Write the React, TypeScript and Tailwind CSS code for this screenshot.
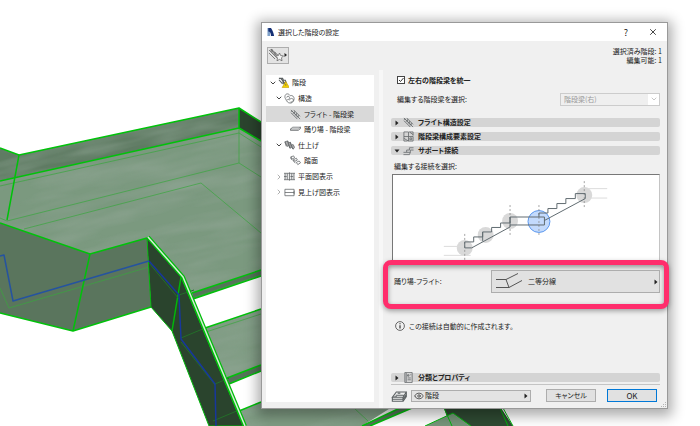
import type { ReactNode } from "react";
import clsx from "clsx";
import { ChevronDown, ChevronRight, Eye, X } from "lucide-react";

type IconName =
  | "stairs"
  | "structure"
  | "flight"
  | "landing"
  | "finish"
  | "tread"
  | "plan"
  | "ceiling"
  | "components"
  | "support"
  | "property"
  | "layer";

const iconPaths: Record<IconName, ReactNode> = {
  stairs: (
    <>
      <path d="M1 1.500h4l1 2h2l1 3M1 3l4 4.500M3 1.500l6 7M5 5l3 5" strokeWidth="1.200" />
      <path d="M8.500 5l4 6.500h-8z" fill="#f5d000" stroke="#b89600" strokeWidth=".6" />
      <path d="M8.500 7.500v2" />
    </>
  ),
  structure: (
    <>
      <path d="M1 4c0-3 3-4 5-2l1 1c2-1 4 1 4 3s-1 5-4 5-4-2-5-4-1-2-1-3z" />
      <path d="M3 5c0-2 3-2 3 0s-2 3-3 2M6 8c0-2 3-3 4-1s-2 3-3 3" />
    </>
  ),
  flight: <path d="M1 1l10 10M1 4l7 7M4 1l7 7M1 2.500h2M3 4.500h2M5 6.500h2M7 8.500h2M5 2.500v2M7 4.500v2M9 6.500v2" />,
  landing: <path d="M.5 5.500L3 3.500h8.500L9 5.500zM.5 5.500V7H9l2.500-2V3.500" fill="#fff" />,
  finish: (
    <>
      <path d="M1 2l3-1 1 2 2-.5 1 3 2-.5 1.500 3L10 10l-2-2-1.500 1-1.500-3-1.500 1z" fill="#b5b5b5" />
      <path d="M1 2l1.500 5M4 1l1 5M5 3l1.500 6M7 2.500l1 5.500M8 5.500l2 4.500" />
    </>
  ),
  tread: <path d="M1 2l3-1 1 2-3 1.500zM4 5l3-1.500 1 2-3 1.500zM7 8l3-1.500 1.500 2-3 2zM1 2v2l2 2M4 5v2l2 2" />,
  plan: <path d="M0 2.500h12v7H0zM2 2.500v7M4 2.500v7M6 1.500v9M8 2.500v7M10 2.500v7M0 6h3M7 6h3" />,
  ceiling: <path d="M1 2.500h10v7H1zM1 6h10M11 4v4" />,
  components: (
    <>
      <path d="M1 1h5v5H1zM1 8l5 3M7 1l4 3M1 6v5h4M7 1h4v4" />
      <path d="M6 6h5v5H6zM7.500 7.500h2v2h-2z" />
    </>
  ),
  support: <path d="M.5 8H4V5.500h3V3h4.500M.5 10.500H7l1-2.500M4 8h4V5.500h3.500" />,
  property: <path d="M2 .5h8v11H2zM5 3h1.500v1.500H5zM8 3h1M5 6.500h3.500M5 8.500h3.500M3.500 1v10" />,
  layer: <path d="M1 7l3-4h7.500l-2.500 4zM1 7v3h8V7M9 10l2.500-3.500V3M1 8.500h8l2.500-3.500M3.500 5.500h6M5 4h2M2.500 6.500h2" />,
};

const Icon = ({ name, className = "size-3" }: { name: IconName; className?: string }) => (
  <svg
    viewBox="0 0 12 12"
    className={clsx("shrink-0", className)}
    fill="none"
    stroke="#5a5f61"
    strokeWidth=".8"
    aria-hidden="true"
  >
    {iconPaths[name]}
  </svg>
);

const Triangle = ({ down = false }: { down?: boolean }) => (
  <svg viewBox="0 0 6 6" className="size-[6px] shrink-0" fill="#222" aria-hidden="true">
    <path d={down ? "M.5 1.500h5L3 4.500z" : "M1.500 .5l3 2.500-3 2.500z"} />
  </svg>
);

interface TreeItem {
  label: string;
  icon: IconName;
  indent: string;
  state?: "open" | "closed";
  selected?: boolean;
}

const treeItems: TreeItem[] = [
  { label: "階段", icon: "stairs", indent: "pl-[3px]", state: "open" },
  { label: "構造", icon: "structure", indent: "pl-[9px]", state: "open" },
  { label: "フライト - 階段梁", icon: "flight", indent: "pl-[15px]", selected: true },
  { label: "踊り場 - 階段梁", icon: "landing", indent: "pl-[15px]" },
  { label: "仕上げ", icon: "finish", indent: "pl-[9px]", state: "open" },
  { label: "踏面", icon: "tread", indent: "pl-[15px]" },
  { label: "平面図表示", icon: "plan", indent: "pl-[9px]", state: "closed" },
  { label: "見上げ図表示", icon: "ceiling", indent: "pl-[9px]", state: "closed" },
];

const SettingsTree = () => (
  <nav className="mt-[5px] mb-[6px] ml-1 w-[108px] shrink-0 bg-white">
    <ul className="grid h-[125px] grid-rows-8">
      {treeItems.map((item) => (
        <li key={item.label} className="flex">
          <button
            type="button"
            className={clsx(
              "flex flex-1 items-center text-left whitespace-nowrap",
              item.indent,
              item.selected && "bg-[#d9d9d9]",
            )}
          >
            <span className="w-[9px] shrink-0">
              {item.state === "open" && <ChevronDown size={8} strokeWidth={3} color="#444" />}
              {item.state === "closed" && <ChevronRight size={8} strokeWidth={2} color="#888" />}
            </span>
            <Icon name={item.icon} className="mr-[3px] size-[11px]" />
            {item.label}
          </button>
        </li>
      ))}
    </ul>
  </nav>
);

const SectionHeader = ({ label, icon, open = false }: { label: string; icon: IconName; open?: boolean }) => (
  <button
    type="button"
    aria-expanded={open}
    className="flex h-[9px] w-full items-center rounded-xs bg-[#d4d4d4] pl-[3px] font-bold whitespace-nowrap"
  >
    <Triangle down={open} />
    <Icon name={icon} className="mr-1 ml-[3px] size-[11px]" />
    {label}
  </button>
);

const ConnectionDiagram = () => (
  <div className="mt-[2px] ml-px h-[88px] border-t border-r border-l border-[#777] border-r-[#c4c4c4] bg-white">
    <svg viewBox="392 174 267 87" className="h-full w-full" fill="none" stroke="#606b70" strokeWidth="1">
      <g fill="#d9d9d9" stroke="none">
        <circle cx="464" cy="247" r="8" />
        <circle cx="485" cy="234" r="8" />
        <circle cx="509.500" cy="220" r="8" />
        <circle cx="584" cy="194" r="8" />
      </g>
      <circle cx="538.500" cy="220.500" r="11" fill="#c3dafc" stroke="#5b98ee" />
      <path d="M443 245.500h21M443 254.500h27M587 187.500h20M587 197h20" stroke="#dcdcdc" />
      <path
        d="M464 233v27M509.500 204v30M538.500 204v30M584 180v27"
        stroke="#8f8f8f"
        strokeWidth=".8"
        strokeDasharray="2 2"
      />
      <path d="M509.500 216h34.500v8h-34.500v2L471 247h-7v-6h9v-5h9v-5h9v-4.500h9V222h9.500zM482 231v9" />
      <path d="M509.500 216v8" />
      <path d="M538.500 216v-4h9v-4.500h9v-5h9v-5h9.500v-5H585v5l-41 22" />
    </svg>
  </div>
);

const ModelView = () => (
  <svg
    className="absolute top-0 left-0"
    width="700"
    height="426"
    viewBox="0 0 700 426"
    fill="none"
    strokeLinejoin="round"
    aria-hidden="true"
  >
    <defs>
      <filter id="grain" x="0" y="0" width="100%" height="100%">
        <feTurbulence type="fractalNoise" baseFrequency=".012 .07" numOctaves="3" seed="4" />
        <feColorMatrix values="0 0 0 0 .28  0 0 0 0 .38  0 0 0 0 .3  2 0 0 0 -.7" />
      </filter>
      <clipPath id="boards">
        <path d="M0 148l19 7 220-47 22 14v148l-69 23-45-55-57 16-90-31zM205 328l55-19v56l-33 13zM239 411l22-9h150l-43 24H245z" />
      </clipPath>
    </defs>
    <path d="M0 181l239-53 22 13v129l-69 23-45-55-57 16-90-31z" fill="#7b997f" />
    <path d="M205 328l56-19v56l-34 13zM239 411l22-9h139l-38 24H245z" fill="#7f9c83" />
    <path d="M0 148l19 7 220-47v20L0 181z" fill="#5f7b63" />
    <g clipPath="url(#boards)">
      <rect x="-80" y="120" width="560" height="420" transform="rotate(-12)" filter="url(#grain)" opacity=".65" />
    </g>
    <path d="M239 108l22 14v19l-22-13z" fill="#2b442e" />
    <path d="M0 223l90 31 57-16 4 69-78 24-73-18z" fill="#5a755d" />
    <path d="M192 293l69-23v6l-68 23zM227 378l34-13v6l-32 13zM362 426l38-18h12l-42 18z" fill="#55735a" />
    <g stroke="#3aa63d" strokeWidth=".7">
      <path d="M0 186l239-53 22 14M0 218l7 3 232-58 22 14M24 229l177-46 60 50M239 128v35M0 288l9 20 140-41" />
      <path d="M206 332l55-18M192 298l69-23M354 408l14 13" />
    </g>
    <g stroke="#00c20a" strokeWidth="1.500">
      <path d="M0 148l19 7 220-47 22 14M239 108v20M0 181l239-53 22 13M19 155L7 220" />
      <path d="M0 223l90 31 57-16M90 254l-17 77M0 313l73 18 78-24" />
      <path d="M192 293l69-23M193 299l68-23M205 328l56-19M227 378l34-13M229 384l32-13M239 411l22-9M362 426l38-18M370 426l42-18" />
    </g>
    <path d="M147 238l34 39 62 149h-34l-37-95-21-24z" fill="#2a442d" stroke="#00b80a" />
    <path d="M181 277l-9 54" stroke="#00b80a" strokeWidth="1.500" />
    <path d="M179 295l15-5M181 338l24-10M215 384l14-6M149 263l30 36M181 342l34 43M213 421l26-11" stroke="#236f29" />
    <path d="M0 256l4-1 9 46 136-40" stroke="#2553a0" strokeWidth="1.500" />
    <path d="M149 261l30 34 2 44 34 45 1 42" stroke="#17379c" strokeWidth="1.500" />
    <path d="M148 237l35 40 62 149" stroke="#00bd0a" strokeWidth="4" />
    <path d="M148 237l35 40 62 149" stroke="#d5edd6" strokeWidth="1.500" />
    <path d="M444 408h57l12 18h-63z" fill="#2f4b33" />
    <path d="M425 426l28-13 18 13z" fill="#77967b" />
    <path d="M425 426l28-13 18 13M444 408l8 18M500 408l8 18M503 408l10 18" stroke="#00b80a" />
  </svg>
);

const SettingsDialog = () => (
  <section className="relative border border-[#999] bg-[#f0f0f0] shadow-[0_3px_12px_4px_rgba(0,0,0,0.32)]">
    <header className="flex h-[18px] items-center bg-white pl-[5px]">
      <svg viewBox="0 0 8 9" className="size-2 shrink-0" aria-hidden="true">
        <path d="M0 0h3v9H0z" fill="#7fa0c8" />
        <path d="M1 0h3c2 3 3 6 3.500 9H4C4 6 3 4 1 4z" fill="#152f74" />
      </svg>
      <h1 className="ml-[3px] flex-1">選択した階段の設定</h1>
      <button type="button" className="mr-5 text-[9px]" aria-label="ヘルプ">
        ?
      </button>
      <button type="button" className="mr-[9px]" aria-label="閉じる">
        <X size={10} strokeWidth={2} />
      </button>
    </header>

    <div className="flex h-[29px] items-start justify-between pt-[6px] pr-[5px] pl-[5px]">
      <button
        type="button"
        aria-label="お気に入り"
        className="flex h-[17px] w-[22px] items-center justify-center border border-[#adadad] bg-[#e3e3e3]"
      >
        <svg viewBox="0 0 20 15" className="h-[15px] w-5" fill="none" stroke="#666" strokeWidth=".8">
          <path d="M1 2l8 8M3 1l8 7M1 5l6 6M2 2h2v2h2v2h2v2M4 1v3M7 4v3" />
          <path
            d="M11.500 5l1.200 2.600 2.800.3-2 2 .5 2.900-2.500-1.400L9 12.800l.5-2.900-2-2 2.800-.3z"
            fill="#f4f4f4"
          />
          <path d="M16.500 5l2.500 2-2.500 2z" fill="#222" stroke="none" />
        </svg>
      </button>
      <p className="text-right">
        選択済み階段: 1<br />
        編集可能: 1
      </p>
    </div>

    <div className="flex">
      <SettingsTree />
      <div className="ml-[5px] w-1 shrink-0 bg-[#f7f7f7]"></div>
      <main className="flex min-w-0 flex-1 flex-col pr-[7px] pb-[6px] pl-2">
        <label className="flex h-5 items-center gap-[3px] pl-[6px] font-bold">
          <span className="relative flex">
            <input
              type="checkbox"
              defaultChecked
              className="peer size-2 appearance-none border border-[#444] bg-white"
            />
            <svg
              viewBox="0 0 8 8"
              className="pointer-events-none absolute inset-0 hidden size-2 peer-checked:block"
              fill="none"
              stroke="#333"
            >
              <path d="M2 4l1.500 1.500L6.500 2" />
            </svg>
          </span>
          左右の階段梁を統一
        </label>
        <div className="flex h-[18px] items-center justify-between pl-[6px]">
          <label htmlFor="beam">編集する階段梁を選択:</label>
          <span className="relative flex">
            <select
              id="beam"
              disabled
              className="h-[13px] w-[100px] appearance-none border border-[#ccc] bg-[#efefef] pl-[3px] text-[#999] opacity-100"
            >
              <option>階段梁(右)</option>
            </select>
            <span className="pointer-events-none absolute inset-y-px right-px flex w-[11px] items-center justify-center bg-white">
              <ChevronDown size={8} strokeWidth={2} color="#aaa" />
            </span>
          </span>
        </div>

        <div className="mt-[10px] flex flex-col gap-[5px]">
          <SectionHeader label="フライト構造設定" icon="flight" />
          <SectionHeader label="階段梁構成要素設定" icon="components" />
          <SectionHeader label="サポート接続" icon="support" open />
        </div>

        <p className="mt-[5px] h-3 pl-[3px] leading-3">編集する接続を選択:</p>
        <ConnectionDiagram />

        <div className="relative mt-2 flex h-[23px] items-center justify-between pl-[3px]">
          <span className="pointer-events-none absolute -top-[10px] -right-[9px] -bottom-4 -left-2 rounded-lg border-5 border-[#ff2d6c] bg-[#efefef] shadow-[0_2px_5px_rgba(0,0,0,0.35),inset_0_2px_5px_rgba(0,0,0,0.4)]"></span>
          <span id="landing-flight" className="relative">
            踊り場-フライト:
          </span>
          <button
            type="button"
            id="landing-flight-value"
            aria-labelledby="landing-flight landing-flight-value"
            className="relative flex h-full w-[169px] items-center border border-[#adadad] bg-[#e1e1e1] pl-1"
          >
            <svg viewBox="0 0 28 18" className="mr-1 h-[18px] w-7" fill="none" stroke="#555" aria-hidden="true">
              <path d="M0 6.500h10l12-6M0 14.500h13l13-7M10 6.500l3 8" />
            </svg>
            <span className="flex-1 text-left">二等分線</span>
            <Triangle />
          </button>
        </div>

        <p className="mt-[25px] flex h-4 items-center gap-1 pl-1">
          <svg viewBox="0 0 10 10" className="size-[10px]" fill="none" stroke="#444" aria-hidden="true">
            <circle cx="5" cy="5" r="4.400" strokeWidth=".8" />
            <path d="M5 4.200v3.300M5 2.200v1.100" strokeWidth="1.300" />
          </svg>
          この接続は自動的に作成されます。
        </p>

        <div className="mt-[39px] border-b border-[#c4c4c4] pb-[2px]">
          <SectionHeader label="分類とプロパティ" icon="property" />
        </div>

        <footer className="mt-1 flex h-[13px] items-center pr-[3px]">
          <Icon name="layer" className="mr-1 size-4" />
          <button
            type="button"
            className="flex h-3 flex-1 items-center gap-px border border-[#adadad] bg-[#e3e3e3] pr-px pl-[2px]"
          >
            <Eye size={10} strokeWidth={2} color="#444" />
            <span className="flex-1 text-left">階段</span>
            <Triangle />
          </button>
          <button type="button" className="ml-[15px] h-full w-[50px] border border-[#adadad] bg-[#e1e1e1] leading-none">
            キャンセル
          </button>
          <button
            type="button"
            className="ml-[11px] h-full w-[50px] border border-[#0078d7] bg-[#e1e1e1] text-[8px] leading-none"
          >
            OK
          </button>
        </footer>
      </main>
    </div>
    <svg viewBox="0 0 6 6" className="absolute right-0 bottom-0 size-[6px]" fill="#b5b5b5" aria-hidden="true">
      <path d="M4 0h1v1H4zM4 2h1v1H4zM4 4h1v1H4zM2 2h1v1H2zM2 4h1v1H2zM0 4h1v1H0z" />
    </svg>
  </section>
);

export default function App() {
  return (
    <div className="relative min-h-screen overflow-hidden bg-white pt-[22px] pr-8 pb-[18px] pl-[261px] font-['Noto_Sans_CJK_JP',sans-serif] text-[7px] leading-[9px] text-[#222] [font-feature-settings:'palt']">
      <ModelView />
      <SettingsDialog />
    </div>
  );
}
